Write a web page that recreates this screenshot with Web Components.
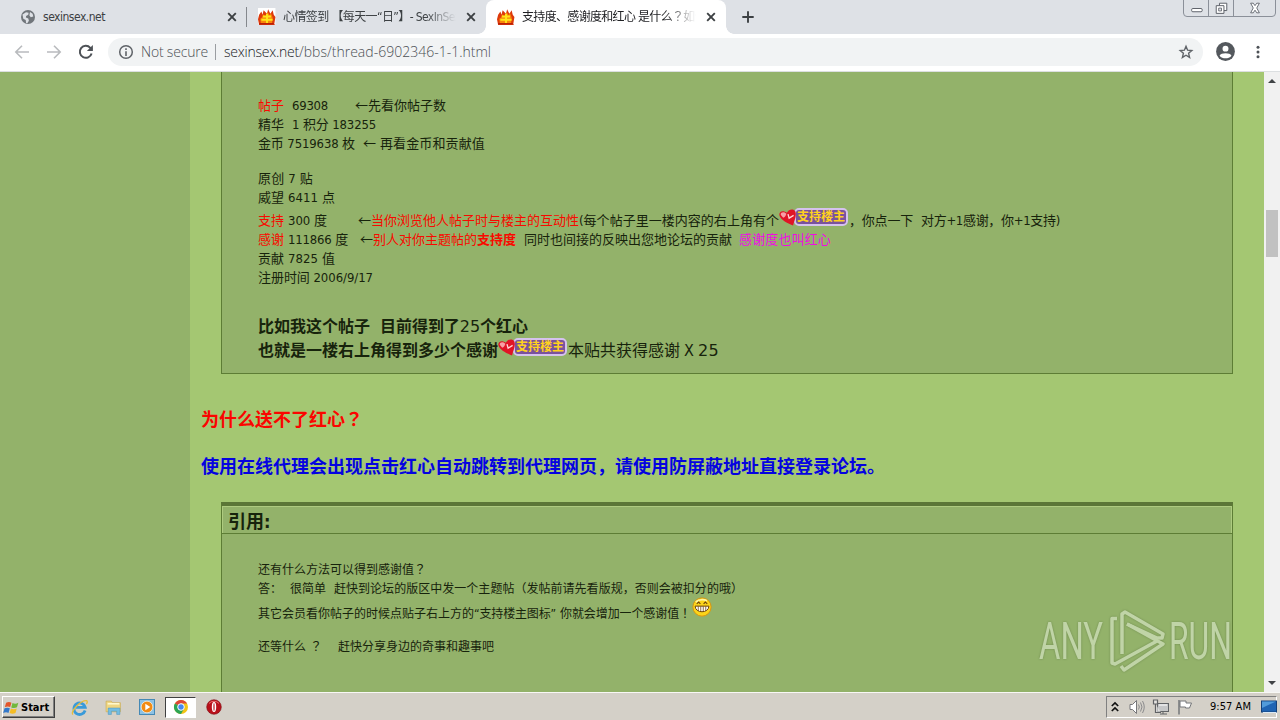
<!DOCTYPE html>
<html lang="zh">
<head>
<meta charset="utf-8">
<title>支持度、感谢度和红心</title>
<style>
  html, body { margin: 0; height: 100%; overflow: hidden; }
  body {
    width: 1280px;
    height: 720px;
    display: flex;
    flex-direction: column;
    font-family: "DejaVu Sans Condensed", "Noto Sans CJK SC", sans-serif;
    color: #17230c;
  }
  .red { color: #f80a00; }
  .pink { color: #f00be4; }
  .gap { height: 16px; }
  /* full-width marks centred in their cell */
  .mid { font-family: "Noto Sans CJK TC", sans-serif; line-height: 1; }
  .arrow { font-family: "Noto Sans CJK SC", sans-serif; line-height: 1; }
  .wide { font-family: "DejaVu Sans", sans-serif; font-weight: normal; }
</style>
</head>
<body>
  <tab-strip>
    <browser-tab style="--w:247px; --pad:20px"><ui-icon slot="icon" name="globe" size="16"></ui-icon><fit-text w="62">sexinsex.net</fit-text></browser-tab>
    <browser-tab fade style="--w:239px; --pad:11px; --line:#85888d"><ui-icon slot="icon" name="fire" size="18"></ui-icon><fit-text w="181">心情签到 【每天一“日”】- SexInSex!</fit-text></browser-tab>
    <browser-tab fade active style="--w:240px; --pad:11px"><ui-icon slot="icon" name="fire" size="18"></ui-icon><fit-text w="184">支持度、感谢度和红心 是什么<span class="mid" lang="zh-TW">？</span>如何</fit-text></browser-tab>
  </tab-strip>
  <address-bar>
    <fit-text slot="state" w="67">Not secure</fit-text>
    <fit-text w="75" style="color:#202124">sexinsex.net</fit-text><fit-text w="192">/bbs/thread-6902346-1-1.html</fit-text>
  </address-bar>
  <forum-page>
    <quote-box style="--box-h:302px; --top:0px; --pad-top:24px">
      <post-line><fit-text class="red" w="26">帖子</fit-text><fit-text gap="8" w="36">69308</fit-text><fit-text gap="27" w="91"><span class="arrow">←</span>先看你帖子数</fit-text></post-line>
      <post-line><fit-text w="26">精华</fit-text><fit-text gap="8" w="8">1</fit-text><fit-text gap="3" w="73">积分 183255</fit-text></post-line>
      <post-line><fit-text w="97">金币 7519638 枚</fit-text><fit-text gap="8" w="122"><span class="arrow">←</span> 再看金币和贡献值</fit-text></post-line>
      <div class="gap"></div>
      <post-line><fit-text w="55">原创 7 贴</fit-text></post-line>
      <post-line><fit-text w="77">威望 6411 点</fit-text></post-line>
      <post-line style="--h:23px"><fit-text class="red" w="26">支持</fit-text><fit-text gap="4" w="39">300 度</fit-text><fit-text gap="31" w="13"><span class="arrow">←</span></fit-text><fit-text class="red" w="208">当你浏览他人帖子时与楼主的互动性</fit-text><fit-text w="200">(每个帖子里一楼内容的右上角有个</fit-text><support-badge>支持楼主</support-badge><fit-text w="64">，你点一下</fit-text><fit-text gap="8" w="139">对方+1感谢，你+1支持)</fit-text></post-line>
      <post-line><fit-text class="red" w="26">感谢</fit-text><fit-text gap="4" w="60">111866 度</fit-text><fit-text gap="12" w="13"><span class="arrow">←</span></fit-text><fit-text class="red" w="104">别人对你主题帖的</fit-text><fit-text class="red" w="39" style="font-weight:bold">支持度</fit-text><fit-text gap="8" w="208">同时也间接的反映出您地论坛的贡献</fit-text><fit-text class="pink" gap="7" w="92">感谢度也叫红心</fit-text></post-line>
      <post-line><fit-text w="77">贡献 7825 值</fit-text></post-line>
      <post-line><fit-text w="115">注册时间 2006/9/17</fit-text></post-line>
      <div class="gap" style="height:25px"></div>
      <post-line style="--h:24px; --size:16px"><fit-text w="112" style="font-weight:bold">比如我这个帖子</fit-text><fit-text gap="10" w="148" style="font-weight:bold">目前得到了<span class="wide">25</span>个红心</fit-text></post-line>
      <post-line style="--h:24px; --size:16px"><fit-text w="240" style="font-weight:bold">也就是一楼右上角得到多少个感谢</fit-text><support-badge>支持楼主</support-badge><fit-text w="112">本贴共获得感谢</fit-text><fit-text gap="4" w="10">X</fit-text><fit-text class="wide" gap="4" w="21">25</fit-text></post-line>
    </quote-box>
    <post-heading style="--m:32px; color:#fb0500"><fit-text w="162">为什么送不了红心<span class="mid" lang="zh-TW">？</span></fit-text></post-heading>
    <post-heading style="--m:19px; color:#0503e0"><fit-text w="684">使用在线代理会出现点击红心自动跳转到代理网页，请使用防屏蔽地址直接登录论坛。</fit-text></post-heading>
    <quote-box titled style="--m:21px; --box-h:190px; --top:4px; --pad-top:28px">
      <span slot="title">引用:</span>
      <post-line style="--size:12px"><fit-text w="168">还有什么方法可以得到感谢值<span class="mid" lang="zh-TW">？</span></fit-text></post-line>
      <post-line style="--size:12px"><fit-text w="24">答：</fit-text><fit-text gap="8" w="36">很简单</fit-text><fit-text gap="8" w="409">赶快到论坛的版区中发一个主题帖（发帖前请先看版规，否则会被扣分的哦）</fit-text></post-line>
      <post-line style="--h:25px; --size:12px"><fit-text w="216">其它会员看你帖子的时候点贴子右上方的</fit-text><fit-text w="82">“支持楼主图标”</fit-text><fit-text gap="4" w="131">你就会增加一个感谢值<span class="mid" lang="zh-TW">！</span></fit-text><grin-face></grin-face></post-line>
      <div class="gap" style="height:14px"></div>
      <post-line style="--size:12px"><fit-text w="48">还等什么</fit-text><fit-text gap="4" w="12"><span class="mid" lang="zh-TW">？</span></fit-text><fit-text gap="16" w="156">赶快分享身边的奇事和趣事吧</fit-text></post-line>
    </quote-box>
    <any-run slot="mark"></any-run>
  </forum-page>
  <task-bar>
    <span slot="start">Start</span>
    <fit-text slot="clock" w="41">9:57 AM</fit-text>
  </task-bar>

<script>
const ICONS = {
  globe: `<circle cx="8" cy="8" r="7" fill="#71767b"/><path d="M2.5 5.5 6 3.2l2.6.6-.3 2-2.2 1.3-.2 1.5 2.4 1 .6 2.2-1.6 2.4-1.2-.3-.4-2.9-2.4-1.3zM10 3l2.6 1.8.7 2.7-2.5.8-1.4-1.8z" fill="#dee1e6"/>`,
  fire: `<rect width="15.500" height="14.500" fill="#fff"/><path d="M1 6 3 3l1 3 1-4 3 3 1-4 2 4 2-3 1 4 1.500 2-1 6 .5 1H1L0 10z" fill="#dd3a0b"/><path d="M2 9.500l1.500-1 1-3 2 2 2-4 2 3 1-2 1.500 4-.5 5H2.500z" fill="#f9850b"/><path d="M4.500 7.500h7M8 5v8.500M3 10.500h10" stroke="#ffe51a" stroke-width="1.700"/><path d="M1 14h13" stroke="#b51c08" stroke-width="1.200"/>`,
  close: `<path d="M4.200 4.200l7.600 7.600M11.800 4.200l-7.600 7.600" stroke="#3c4043" stroke-width="1.900"/>`,
  plus: `<path d="M8 2.300v11.400M2.300 8h11.400" stroke="#3c4043" stroke-width="1.900"/>`,
  back: `<path d="M15 8H2M8 1.700 1.800 8 8 14.300" fill="none" stroke="#b9bbbe" stroke-width="1.600"/>`,
  forward: `<path d="M1 8h13M8 1.700 14.200 8 8 14.300" fill="none" stroke="#b9bbbe" stroke-width="1.600"/>`,
  reload: `<path d="M13.600 9.500a6 6 0 1 1-1.300-5.700L14 5.600" fill="none" stroke="#4d5156" stroke-width="2"/><path d="M14.900 1v6H8.900z" fill="#4d5156"/>`,
  info: `<circle cx="8" cy="8" r="6.300" fill="none" stroke="#5f6368" stroke-width="1.500"/><path d="M8 7.200V12M8 4.200v1.700" stroke="#5f6368" stroke-width="1.600"/>`,
  star: `<path d="M8 2.300 9.600 6.200l4.200.3-3.200 2.800 1 4.100L8 11.200l-3.600 2.200 1-4.100L2.200 6.500 6.400 6.200z" fill="none" stroke="#5f6368" stroke-width="1.400"/>`,
  user: `<circle cx="8" cy="8" r="7.900" fill="#54585d"/><circle cx="8" cy="5.600" r="2.500" fill="#fff"/><path d="M3 11.500c1.200-2.600 8.800-2.600 10 0-2.400 3-7.600 3-10 0z" fill="#fff"/>`,
  dots: `<g fill="#4d5156"><circle cx="8" cy="3.200" r="1.500"/><circle cx="8" cy="8" r="1.500"/><circle cx="8" cy="12.800" r="1.500"/></g>`,
  min: `<rect x="2" y="8" width="13" height="4" rx="1.500" fill="#fff" stroke="#5c6068" stroke-width="1.200"/>`,
  restore: `<path d="M5.500 1.500h9v9h-9z" fill="#fff" stroke="#5c6068" stroke-width="1.200"/><path d="M1.500 4.500h9.500v9.500H1.500z" fill="#fff" stroke="#5c6068" stroke-width="1.200"/><path d="M4.500 7.500h3.500V11H4.500z" fill="#dee1e6" stroke="#5c6068"/>`,
  winclose: `<path d="M3 2.500h3l2 2.800 2-2.800h3L10 8l3 5.500h-3l-2-3-2 3H3L6 8z" fill="#fff" stroke="#5c6068"/>`,
  heart: `<path d="M12.500 15.500C8.500 14 1 10.500.3 6.200 0 3 3.500 1.500 7 4.200 8.500.8 13 .2 14.500 3c1.500 3.500-.8 7.500-2 12.500z" fill="#e01426"/><path d="M1.500 6c0-2.500 3-2.800 5-1-.5 2-1.500 3.200-2.800 3.600z" fill="#f7a0a6"/><path d="M8 5.500l1 3.500 4-2.500" stroke="#ffd5d8" stroke-width="1.200" fill="none"/>`,
  grin: `<circle cx="8" cy="8" r="7.300" fill="#fcd51a" stroke="#d98e0a" stroke-width=".7"/><path d="M3 4a7 5 0 0 1 9-1" stroke="#fff6a0" stroke-width="1.500" fill="none"/><path d="M3.800 5.500 5.300 4l1.400 1.500M9.300 5.500 10.700 4l1.500 1.500" fill="none" stroke="#6c4208" stroke-width=".9"/><path d="M2.500 7.300h11c0 6-11 6-11 0z" fill="#fff" stroke="#6c4208" stroke-width=".8"/><path d="M5 7.500v3.600M7 7.500v4M9 7.500v4M11 7.500v3.600" stroke="#6c4208" stroke-width=".6"/>`,
  flag: `<path d="M2 3.500c2-1.200 3.700-.9 5 0L5.800 7.600C4.500 6.800 2.700 6.800.8 7.600z" fill="#e4562a"/><path d="M8 3.800c2 1 3.500.8 5.500-.2l-1.300 4.200c-1.700.9-3.500 1-5.400.1z" fill="#72b83c"/><path d="M.5 8.800c2-1 3.500-.8 5 0l-1.300 4.300c-1.400-.9-3-.9-5 0z" fill="#3378ca"/><path d="M6.500 9c2 1 3.700.8 5.500-.1l-1.200 4.200c-1.900.9-3.600.9-5.500 0z" fill="#f5bd25"/>`,
  ie: `<path d="M13.300 10.800A5.400 5.400 0 1 1 13.400 7.900H4.500" fill="none" stroke="#3a9ad9" stroke-width="2.600"/><path d="M1.600 14.600C-.5 11.500 9 1.200 14.700 1.600c1 .6.600 2-.2 3.200" fill="none" stroke="#e7bd3b" stroke-width="1.300"/>`,
  folder: `<path d="M1 2h5l1 1.500h7.500V12H1z" fill="#efd683" stroke="#c9aa4e" stroke-width=".6"/><path d="M2.500 4.500h11" stroke="#fff8cc" stroke-width="1.500"/><path d="M3 14.500V8.500h11v6h-3V11.500H6v3z" fill="#72bde2" stroke="#4b94bd" stroke-width=".5"/>`,
  media: `<rect x=".5" y=".5" width="15" height="15" fill="#8dc2e4" stroke="#4589b5"/><circle cx="8" cy="8" r="5.800" fill="#f28b13" stroke="#fff3df" stroke-width=".7"/><path d="M6.300 4.800 11.300 8l-5 3.200z" fill="#fff"/>`,
  chrome: `<circle cx="8" cy="8" r="7" fill="#f3c416"/><path d="M8 8 1.900 4.500A7 7 0 0 1 14.100 4.500H8z" fill="#de4638"/><path d="M1.900 4.500A7 7 0 0 0 8 15l3-5.300L8 8z" fill="#2da554"/><circle cx="8" cy="8" r="3.300" fill="#4688ef" stroke="#fff"/>`,
  opera: `<circle cx="8" cy="8" r="7.300" fill="#b9101a" stroke="#7c0a10" stroke-width=".6"/><path d="M3 4.500a6 5 0 0 1 10 0" stroke="#e86a6a" fill="none"/><ellipse cx="8" cy="8" rx="2.200" ry="5" fill="#fff"/><ellipse cx="8" cy="8" rx=".6" ry="4" fill="#b9101a"/>`,
  chevrons: `<path d="M4.800 7 8 4l3.200 3M4.800 12 8 9l3.200 3" fill="none" stroke="#111" stroke-width="1.700"/>`,
  sound: `<path d="M1 5.500h2.500L7.500 1.500v13l-4-4H1z" fill="#fff" stroke="#77777a"/><path d="M9.500 5.500q1.700 2.500 0 5M11.500 3.500q3 4.500 0 9M13.500 2q3.500 6 0 12" fill="none" stroke="#8b8b8d"/>`,
  net: `<rect x="4.500" y="4.500" width="11" height="8" fill="#c6c7c8" stroke="#626467"/><path d="M6 6h8" stroke="#fff"/><path d="M7 15h7M10 12.500V15" stroke="#626467"/><path d="M.5 1h4v4h-4zM2.500 5v8.500H8" fill="#eee" fill-opacity=".6" stroke="#606265" stroke-width="1.200"/>`,
  pennant: `<path d="M2 1v14.500" stroke="#75777a" stroke-width="1.500"/><path d="M3 2h6v2h5.500L12.500 9H8.500V8H3z" fill="#fff" stroke="#75777a"/>`,
  desktop: `<rect x=".5" y="2" width="15" height="11" fill="#1f64b3" stroke="#154179"/><path d="M1 2.500h14L1 9z" fill="#519bda"/><path d="M2 13.500h13" stroke="#dce9f3"/>`
};

// Shared helper, every component below keeps its markup in html()
class BaseElement extends HTMLElement {
  constructor() {
    super().attachShadow({ mode: "open" });
  }
  connectedCallback() {
    this.shadowRoot.innerHTML = this.html();
  }
}

customElements.define("ui-icon", class extends BaseElement {
  html() {
    const size = this.getAttribute("size") || 16;
    return `
      <style>
        :host { display: inline-block; flex: none; width: ${size}px; height: ${size}px; }
        svg { display: block; overflow: visible; }
      </style>
      <svg width="${size}" height="${size}" viewBox="0 0 16 16">${ICONS[this.getAttribute("name")]}</svg>`;
  }
});

customElements.define("grin-face", class extends BaseElement {
  html() {
    return `
      <style>:host { display: block; height: 21px; margin: 0 0 6px 1px; line-height: 0; }</style>
      <ui-icon name="grin" size="20"></ui-icon>`;
  }
});

/* Text run with a fixed advance: the difference is spread over the letters */
customElements.define("fit-text", class extends BaseElement {
  html() {
    return `
      <style>
        :host { display: block; flex: none; width: ${this.getAttribute("w")}px; margin-left: ${this.getAttribute("gap") || 0}px; }
        .run { display: inline-block; white-space: pre; line-height: inherit; vertical-align: top; }
      </style>
      <span class="run"><slot></slot></span>`;
  }
  // called once everything is defined, the parents set the font size
  fit() {
    const run = this.shadowRoot.querySelector(".run");
    const natural = run.getBoundingClientRect().width;
    const count = [...this.textContent].length;
    run.style.letterSpacing = (this.getAttribute("w") - natural) / count + "px";
  }
});

customElements.define("browser-tab", class extends BaseElement {
  html() {
    return `
      <style>
        :host {
          display: flex; align-items: center; box-sizing: border-box; flex: none; position: relative;
          width: var(--w); height: 34px; padding: 0 7px 0 var(--pad); gap: 7px;
          font-size: 12px; color: #3c4043;
        }
        :host([active]) { background: #fff; border-radius: 8px 8px 0 0; color: #202124; }
        :host([active])::before, :host([active])::after {
          content: ""; position: absolute; bottom: 0; width: 8px; height: 8px;
        }
        :host([active])::before { left: -8px; background: radial-gradient(circle at 0 0, transparent 7.500px, #fff 8px); }
        :host([active])::after { right: -8px; background: radial-gradient(circle at 100% 0, transparent 7.500px, #fff 8px); }
        .title { flex: 1; min-width: 0; overflow: hidden; height: 18px; line-height: 18px; }
        :host([fade]) .title { -webkit-mask-image: linear-gradient(90deg, #000 82%, transparent); mask-image: linear-gradient(90deg, #000 82%, transparent); }
        .line { width: 1px; height: 20px; background: var(--line, transparent); margin-left: -12px; margin-right: 4px; }
      </style>
      <div class="line"></div>
      <slot name="icon"></slot>
      <div class="title"><slot></slot></div>
      <ui-icon name="close" size="16"></ui-icon>`;
  }
});

customElements.define("tab-strip", class extends BaseElement {
  html() {
    return `
      <style>
        :host { display: flex; flex: none; height: 34px; background: #dee1e6; }
        .new { margin: 9px 0 0 14px; }
        .buttons {
          display: flex; margin: -1px 4px 0 auto; height: 16px; border: 1px solid #8b9099;
          border-radius: 0 0 4px 4px;
        }
        .buttons span { display: grid; place-items: center; width: 24px; border-right: 1px solid #8b9099; }
        .buttons span:last-child { width: 41px; border: 0; }
      </style>
      <slot></slot>
      <ui-icon class="new" name="plus" size="16"></ui-icon>
      <div class="buttons">
        <span><ui-icon name="min" size="13"></ui-icon></span>
        <span><ui-icon name="restore" size="13"></ui-icon></span>
        <span><ui-icon name="winclose" size="14"></ui-icon></span>
      </div>`;
  }
});

customElements.define("address-bar", class extends BaseElement {
  html() {
    return `
      <style>
        :host {
          display: flex; align-items: center; flex: none; box-sizing: border-box; height: 38px;
          padding: 0 14px 2px; background: #fff; border-bottom: 1px solid #dcdfe1;
          font: 300 14px/20px "Open Sans", sans-serif; color: #4c5055;
        }
        .nav { display: flex; gap: 16px; width: 94px; }
        .field {
          display: flex; align-items: center; box-sizing: border-box; width: 1095px; height: 28px;
          padding: 0 9px 0 10px; border-radius: 14px; background: #f1f3f4;
        }
        .field > i { width: 1px; height: 16px; margin: 0 8px 0 7px; background: #9a9da1; }
        slot[name="state"] { display: block; margin-left: 7px; }
        .star { margin-left: auto; }
        .user { margin-left: 13px; }
        .dots { margin-left: 15px; }
      </style>
      <div class="nav">
        <ui-icon name="back"></ui-icon><ui-icon name="forward"></ui-icon><ui-icon name="reload"></ui-icon>
      </div>
      <div class="field">
        <ui-icon name="info"></ui-icon>
        <slot name="state"></slot><i></i><slot></slot>
        <ui-icon class="star" name="star"></ui-icon>
      </div>
      <ui-icon class="user" name="user" size="19"></ui-icon>
      <ui-icon class="dots" name="dots"></ui-icon>`;
  }
});

customElements.define("forum-page", class extends BaseElement {
  html() {
    return `
      <style>
        :host { display: flex; flex: none; height: 620px; overflow: hidden; position: relative; background: #a4c772; }
        .side { flex: none; width: 190px; background: #93b26a; }
        main { width: 1074px; min-width: 0; }
        .scroll {
          display: flex; flex-direction: column; align-items: center; box-sizing: border-box;
          width: 16px; padding: 7px 0; background: #f1f1f1;
        }
        .thumb { width: 12px; height: 47px; margin: 127px 0 auto; background: #c1c1c1; }
        .up, .down { border: 4px solid transparent; height: 0; }
        .up { border-top: 0; border-bottom-color: #404346; }
        .down { border-bottom: 0; border-top-color: #404346; }
      </style>
      <div class="side"></div>
      <main><slot></slot></main>
      <div class="scroll"><div class="up"></div><div class="thumb"></div><div class="down"></div></div>
      <slot name="mark"></slot>`;
  }
});

customElements.define("quote-box", class extends BaseElement {
  html() {
    const title = this.hasAttribute("titled") ? `<header><slot name="title"></slot></header>` : "";
    return `
      <style>
        :host {
          display: block; box-sizing: border-box; width: 1012px; height: var(--box-h);
          margin: var(--m, 0) 0 0 31px; background: #93b26a;
          border: 1px solid #5d7d35; border-top: var(--top) solid #5b7637;
        }
        :host([titled]) { border-bottom: 0; }
        header {
          height: 26px; padding-left: 5px; border: 1px solid #aecb80; border-width: 1px 1px 0 1px;
          box-shadow: 0 1px #5d7d35; font-size: 18px; line-height: 29px; font-weight: bold;
        }
        .body { padding: var(--pad-top) 0 0 36px; }
      </style>
      ${title}
      <div class="body"><slot></slot></div>`;
  }
});

customElements.define("post-line", class extends BaseElement {
  html() {
    return `
      <style>
        :host {
          display: flex; align-items: flex-end; height: var(--h, 19px);
          font-size: var(--size, 13px); line-height: 19px;
        }
      </style>
      <slot></slot>`;
  }
});

customElements.define("post-heading", class extends BaseElement {
  html() {
    return `
      <style>
        :host { display: block; height: 28px; margin: var(--m) 0 0 11px; font-size: 18px; line-height: 28px; font-weight: bold; }
      </style>
      <slot></slot>`;
  }
});

customElements.define("support-badge", class extends BaseElement {
  html() {
    return `
      <style>
        :host { display: flex; flex: none; align-items: center; width: 69px; height: 19px; margin: 0 1px 4px 0; }
        ui-icon { margin-right: -3px; z-index: 1; }
        span {
          box-sizing: border-box; flex: 1; height: 18px; border: 2px solid #d5c2ee; border-radius: 5px;
          background: #7a529c; color: #ffd21c; font-size: 12px; line-height: 14px; font-weight: bold;
          text-align: center; white-space: nowrap;
        }
      </style>
      <ui-icon name="heart" size="18"></ui-icon><span><slot></slot></span>`;
  }
});

customElements.define("any-run", class extends BaseElement {
  html() {
    return `
      <style>
        :host { position: absolute; left: 1036px; top: 534px; opacity: .5; filter: drop-shadow(0 0 1px #4e6636); }
        svg { display: block; }
        text { font: 400 51px Roboto, sans-serif; fill: #eef6e4; }
      </style>
      <svg width="210" height="76">
        <text x="3" y="53" textLength="64" lengthAdjust="spacingAndGlyphs">ANY</text>
        <g fill="none" stroke="#eef6e4" stroke-width="3.500" stroke-linejoin="round">
          <path d="M81 12.500h-5V57l3 1 42-23"/>
          <path d="M86 48V8l3-2 38 22-1 4h-5L91 18"/>
          <path d="M91 18l36 20-39 26-3-4"/>
        </g>
        <text x="133" y="53" textLength="63" lengthAdjust="spacingAndGlyphs">RUN</text>
      </svg>`;
  }
});

customElements.define("task-bar", class extends BaseElement {
  html() {
    return `
      <style>
        :host {
          display: flex; align-items: center; flex: 1; box-sizing: border-box; padding: 1px 3px 0 2px;
          background: #d4d0c8; border-top: 1px solid #f8f8f5; font-size: 11px; color: #000;
        }
        .start {
          display: flex; align-items: center; box-sizing: border-box; width: 53px; height: 22px; padding-left: 1px;
          border: 1px solid; border-color: #fff #404040 #404040 #fff; box-shadow: inset -1px -1px #808080;
          font-weight: bold; white-space: nowrap;
        }
        .apps { display: flex; align-items: center; margin-left: 16px; gap: 17px; }
        .active {
          display: grid; place-items: center; width: 29px; height: 19px; margin: 0 -7px 0 -7px; background: #fff;
          border: 1px solid; border-color: #404040 #fff #fff #404040;
        }
        .tray {
          display: flex; align-items: center; box-sizing: border-box; width: 171px; height: 22px; margin-left: auto;
          border: 1px solid; border-color: #808080 #fff #fff #808080; line-height: 16px;
        }
        .tray ui-icon { margin-left: 8px; }
        .tray ui-icon:first-child { margin-left: 0; }
        .clock { margin-left: 17px; }
      </style>
      <div class="start"><ui-icon name="flag" size="17"></ui-icon><slot name="start"></slot></div>
      <div class="apps">
        <ui-icon name="ie" size="17"></ui-icon>
        <ui-icon name="folder" size="17"></ui-icon>
        <ui-icon name="media"></ui-icon>
        <div class="active"><ui-icon name="chrome"></ui-icon></div>
        <ui-icon name="opera"></ui-icon>
      </div>
      <div class="tray">
        <ui-icon name="chevrons"></ui-icon>
        <ui-icon name="sound" style="margin-left:6px"></ui-icon>
        <ui-icon name="net"></ui-icon>
        <ui-icon name="pennant"></ui-icon>
        <div class="clock"><slot name="clock"></slot></div>
        <ui-icon name="desktop" style="margin-left:10px"></ui-icon>
      </div>`;
  }
});

document.querySelectorAll("fit-text").forEach((el) => el.fit());
</script>
</body>
</html>
